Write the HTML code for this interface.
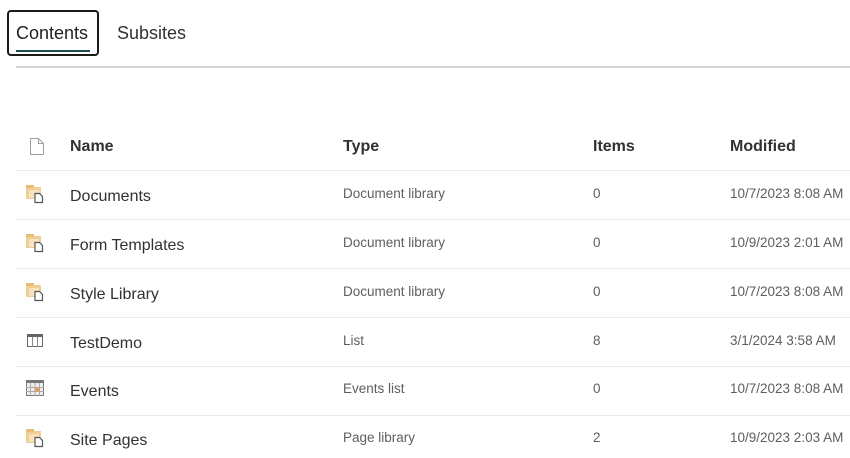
<!DOCTYPE html>
<html><head><meta charset="utf-8"><style>
body{margin:0;width:850px;height:458px;background:#fff;font-family:"Liberation Sans",sans-serif;position:relative;overflow:hidden;color:#323130}
.a{position:absolute;white-space:nowrap}
.tab{left:7px;top:10px;width:88px;height:42px;border:2px solid #1b1a19;border-radius:4px}
.hd{font-size:16px;font-weight:bold;color:#323130}
.nm{font-size:16px;color:#323130}
.sm{font-size:13.5px;color:#605e5c}
.ln{position:absolute;left:16px;right:0;height:1px;background:#edebe9}
</style></head><body>
<div class="a tab"></div>
<div class="a" style="left:16px;top:23px;font-size:18px;color:#201f1e">Contents</div>
<div class="a" style="left:16px;top:50px;width:74px;height:2px;background:#1b4f50"></div>
<div class="a" style="left:117px;top:23px;font-size:18px;color:#323130">Subsites</div>
<div class="ln" style="top:66px;height:2px;background:#d6d6d6"></div>

<svg class="a" style="left:29px;top:137px" width="16" height="19" viewBox="0 0 16 19"><path d="M1.5 1.5h8l5 5v11h-13z M9.5 1.5v5h5" fill="none" stroke="#a19f9d" stroke-width="1"/></svg>
<div class="a hd" style="left:70px;top:138px">Name</div>
<div class="a hd" style="left:343px;top:138px">Type</div>
<div class="a hd" style="left:593px;top:138px">Items</div>
<div class="a hd" style="left:730px;top:138px">Modified</div>

<div class="ln" style="top:170px"></div>
<div class="ln" style="top:219px"></div>
<div class="ln" style="top:268px"></div>
<div class="ln" style="top:317px"></div>
<div class="ln" style="top:366px"></div>
<div class="ln" style="top:415px"></div>

<svg width="0" height="0" style="position:absolute"><defs>
<g id="f"><rect x="0" y="2" width="15" height="12" fill="#f0cf96"/><rect x="0" y="0" width="8" height="3" fill="#e8bd74"/><rect x="3" y="5" width="10" height="8" fill="#f7e2bd"/><path d="M9 8.5h4.5l3 3v6h-7.5z" fill="#fff" stroke="#555" stroke-width="1.2"/></g>
</defs></svg>
<svg class="a" style="left:26px;top:185px" width="18" height="19"><use href="#f"/></svg>
<svg class="a" style="left:26px;top:234px" width="18" height="19"><use href="#f"/></svg>
<svg class="a" style="left:26px;top:283px" width="18" height="19"><use href="#f"/></svg>
<svg class="a" style="left:26px;top:429px" width="18" height="19"><use href="#f"/></svg>
<svg class="a" style="left:27px;top:334px" width="16" height="13"><rect x="0.5" y="0.5" width="15" height="12" fill="#fff" stroke="#666"/><rect x="0" y="0" width="16" height="3" fill="#666"/><path d="M5.5 3v10M10.5 3v10" stroke="#888"/></svg>
<svg class="a" style="left:26px;top:380px" width="18" height="16"><rect x="0.5" y="0.5" width="17" height="15" fill="#eee" stroke="#777"/><rect x="0" y="0" width="18" height="3" fill="#777"/><path d="M4.5 3v13M9 3v13M13.5 3v13M0 7.5h18M0 11.5h18" stroke="#aaa"/><rect x="9.5" y="7.5" width="4" height="4" fill="#e8a060"/></svg>

<div class="a nm" style="left:70px;top:188px">Documents</div>
<div class="a sm" style="left:343px;top:186px">Document library</div>
<div class="a sm" style="left:593px;top:186px">0</div>
<div class="a sm" style="left:730px;top:186px">10/7/2023 8:08 AM</div>

<div class="a nm" style="left:70px;top:237px">Form Templates</div>
<div class="a sm" style="left:343px;top:235px">Document library</div>
<div class="a sm" style="left:593px;top:235px">0</div>
<div class="a sm" style="left:730px;top:235px">10/9/2023 2:01 AM</div>

<div class="a nm" style="left:70px;top:286px">Style Library</div>
<div class="a sm" style="left:343px;top:284px">Document library</div>
<div class="a sm" style="left:593px;top:284px">0</div>
<div class="a sm" style="left:730px;top:284px">10/7/2023 8:08 AM</div>

<div class="a nm" style="left:70px;top:335px">TestDemo</div>
<div class="a sm" style="left:343px;top:333px">List</div>
<div class="a sm" style="left:593px;top:333px">8</div>
<div class="a sm" style="left:730px;top:333px">3/1/2024 3:58 AM</div>

<div class="a nm" style="left:70px;top:383px">Events</div>
<div class="a sm" style="left:343px;top:381px">Events list</div>
<div class="a sm" style="left:593px;top:381px">0</div>
<div class="a sm" style="left:730px;top:381px">10/7/2023 8:08 AM</div>

<div class="a nm" style="left:70px;top:432px">Site Pages</div>
<div class="a sm" style="left:343px;top:430px">Page library</div>
<div class="a sm" style="left:593px;top:430px">2</div>
<div class="a sm" style="left:730px;top:430px">10/9/2023 2:03 AM</div>
</body></html>
